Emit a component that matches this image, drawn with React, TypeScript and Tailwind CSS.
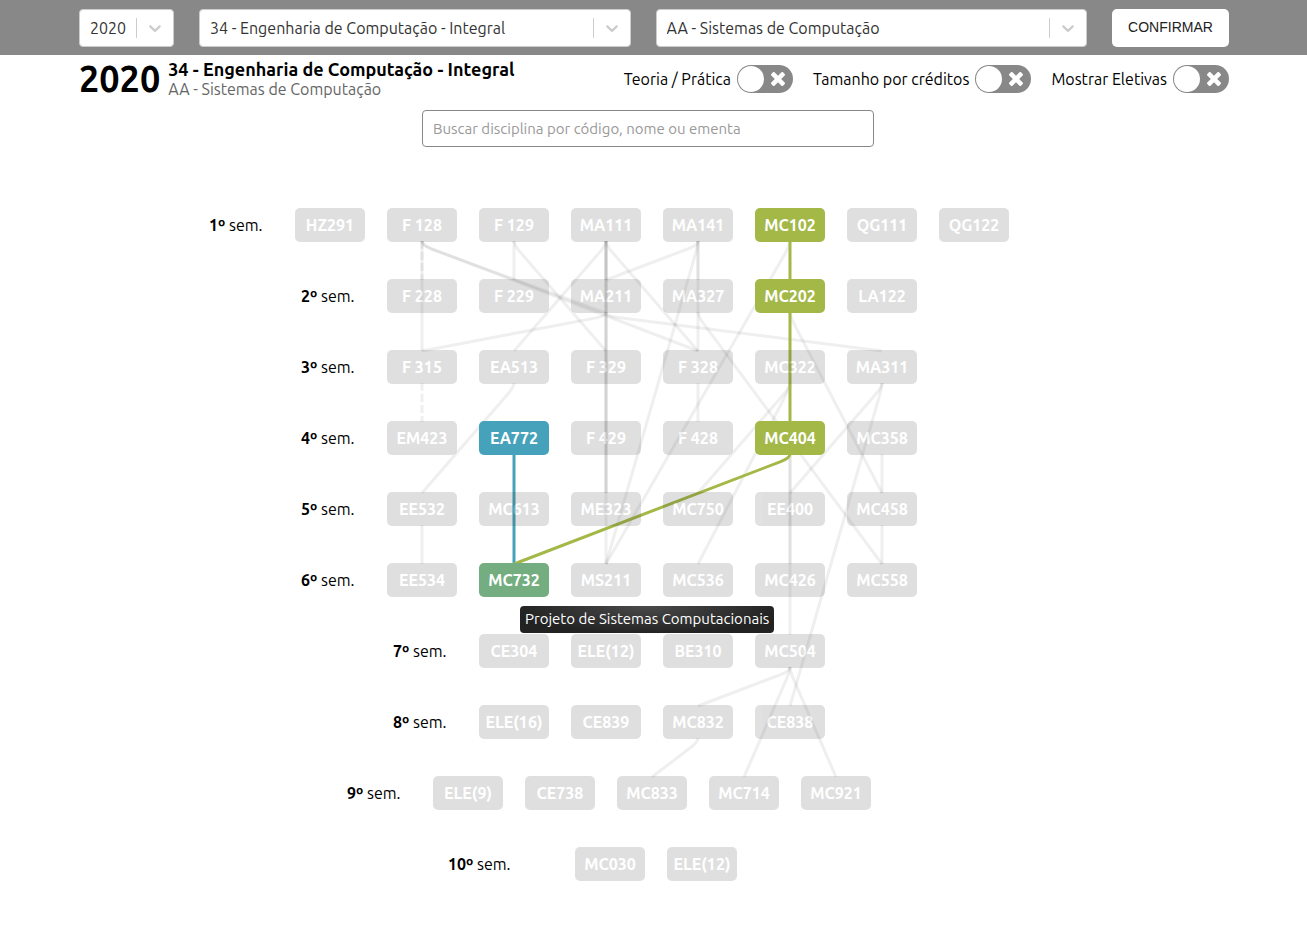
import { useState } from "react";
import type { ReactNode } from "react";

type Tone = "green" | "blue" | "mixed";

const TONES: Record<Tone, string> = {
  green: "bg-[#a3b847]",
  blue: "bg-[#46a2ba]",
  mixed: "bg-[#74ae80]",
};

const HIGHLIGHTED: Record<string, Tone> = {
  MC102: "green",
  MC202: "green",
  MC404: "green",
  EA772: "blue",
  MC732: "mixed",
};

const SEMESTERS: string[][] = [
  ["HZ291", "F 128", "F 129", "MA111", "MA141", "MC102", "QG111", "QG122"],
  ["F 228", "F 229", "MA211", "MA327", "MC202", "LA122"],
  ["F 315", "EA513", "F 329", "F 328", "MC322", "MA311"],
  ["EM423", "EA772", "F 429", "F 428", "MC404", "MC358"],
  ["EE532", "MC613", "ME323", "MC750", "EE400", "MC458"],
  ["EE534", "MC732", "MS211", "MC536", "MC426", "MC558"],
  ["CE304", "ELE(12)", "BE310", "MC504"],
  ["ELE(16)", "CE839", "MC832", "CE838"],
  ["ELE(9)", "CE738", "MC833", "MC714", "MC921"],
  ["MC030", "ELE(12)"],
];

// Geometry of the grid, relative to the first semester's label.
const PITCH_X = 92;
const PITCH_Y = 71;
const NODE_HEIGHT = 34;
const CENTER = 443;

const POSITIONS = new Map<string, { x: number; row: number }>();
SEMESTERS.forEach((codes, row) => {
  const shift = row === 9 ? 4 : 0;
  codes.forEach((code, i) => {
    POSITIONS.set(code, { x: CENTER + shift + (i - (codes.length - 1) / 2) * PITCH_X, row });
  });
});

const EDGES: [string, string][] = [
  ["F 128", "F 315"],
  ["F 128", "F 328"],
  ["F 129", "F 229"],
  ["F 129", "F 329"],
  ["MA111", "MA211"],
  ["MA111", "EA513"],
  ["MA111", "ME323"],
  ["MA111", "ME323"],
  ["MA111", "MS211"],
  ["MA111", "F 328"],
  ["MA141", "MA211"],
  ["MA141", "MA327"],
  ["MA141", "F 328"],
  ["MA141", "MS211"],
  ["MA211", "F 315"],
  ["MA211", "MA311"],
  ["MA327", "MC558"],
  ["MC102", "MS211"],
  ["MC202", "MC458"],
  ["F 328", "F 428"],
  ["EA513", "EE532"],
  ["EE532", "EE534"],
  ["MC322", "MC750"],
  ["MC322", "MC536"],
  ["MA311", "EE400"],
  ["MA311", "CE838"],
  ["MC358", "MC458"],
  ["MC458", "MC558"],
  ["MC404", "MC426"],
  ["MC404", "MC504"],
  ["MC504", "MC832"],
  ["MC504", "MC714"],
  ["MC504", "MC921"],
  ["MC832", "MC833"],
];

const DASHED: [string, string][] = [
  ["F 128", "F 228"],
  ["F 315", "EM423"],
];

const ACTIVE: [string, string, string][] = [
  ["EA772", "MC732", "#46a2ba"],
  ["MC102", "MC202", "#a3b847"],
  ["MC202", "MC404", "#a3b847"],
  ["MC404", "MC732", "#a3b847"],
];

// Leaves the course downwards, bends shortly, then runs straight to the target.
function edgePath(from: string, to: string) {
  const a = POSITIONS.get(from)!;
  const b = POSITIONS.get(to)!;
  const y1 = a.row * PITCH_Y + NODE_HEIGHT - 1;
  const y2 = b.row * PITCH_Y + 1;
  const bendY = y1 + 4;
  const dx = b.x - a.x;
  const dy = y2 - bendY;
  const t = 10 / Math.hypot(dx, dy);
  return `M${a.x} ${y1}Q${a.x} ${bendY} ${a.x + dx * t} ${bendY + dy * t}L${b.x} ${y2}`;
}

function Select({ label, options, className }: { label: string; options: string[]; className: string }) {
  return (
    <div className={`grid h-[38px] items-center rounded border border-[#ccc] bg-white ${className}`}>
      <select
        aria-label={label}
        className="col-start-1 row-start-1 h-full w-full appearance-none rounded bg-transparent pr-10 pl-[10px] text-[16px] text-[#333] outline-none"
      >
        {options.map((o) => (
          <option key={o}>{o}</option>
        ))}
      </select>
      <div className="pointer-events-none col-start-1 row-start-1 flex items-center justify-self-end">
        <span className="h-5 w-px bg-[#ccc]" />
        <svg viewBox="0 0 20 20" className="mx-2 size-5 fill-[#ccc]" aria-hidden="true">
          <path d="M4.516 7.548c0.436-0.446 1.043-0.481 1.576 0l3.908 3.747 3.908-3.747c0.533-0.481 1.141-0.446 1.574 0 0.436 0.445 0.408 1.197 0 1.615-0.406 0.418-4.695 4.502-4.695 4.502-0.217 0.223-0.502 0.335-0.787 0.335s-0.57-0.112-0.789-0.335c0 0-4.287-4.084-4.695-4.502s-0.436-1.17 0-1.615z" />
        </svg>
      </div>
    </div>
  );
}

function Toggle({ children }: { children: ReactNode }) {
  const [on, setOn] = useState(false);
  return (
    <label className="flex cursor-pointer items-center gap-[6px] text-[16px]">
      {children}
      <input type="checkbox" role="switch" checked={on} onChange={() => setOn(!on)} className="peer sr-only" />
      <span className="flex h-7 w-14 items-center justify-between rounded-full bg-[#888] pr-2 pl-px peer-checked:flex-row-reverse peer-checked:pr-px peer-checked:pl-2">
        <span className="size-[26px] rounded-full bg-white" />
        <svg viewBox="110 366 1188 1188" className="size-[14px] fill-white" aria-hidden="true">
          <path d="M1298 1322q0 40-28 68l-136 136q-28 28-68 28t-68-28l-294-294-294 294q-28 28-68 28t-68-28l-136-136q-28-28-28-68t28-68l294-294-294-294q-28-28-28-68t28-68l136-136q28-28 68-28t68 28l294 294 294-294q28-28 68-28t68 28l136 136q28 28 28 68t-28 68l-294 294 294 294q28 28 28 68z" />
        </svg>
      </span>
    </label>
  );
}

function Course({ code, tooltip }: { code: string; tooltip?: string }) {
  const tone = HIGHLIGHTED[code];
  return (
    <div className="relative">
      <button
        type="button"
        className={`h-[34px] w-[70px] rounded-[5px] text-center text-[16px] font-bold whitespace-nowrap text-white ${
          tone ? TONES[tone] : "bg-[#333] opacity-15"
        }`}
      >
        {code}
      </button>
      {tooltip && (
        <div
          role="tooltip"
          className="absolute top-[43px] left-[41px] z-10 flex h-[27px] items-center rounded bg-[radial-gradient(ellipse_at_top,#4a4a4a,#222_75%)] px-[5px] text-[15px] whitespace-nowrap text-white"
        >
          {tooltip}
        </div>
      )}
    </div>
  );
}

function Edges() {
  return (
    <svg className="pointer-events-none absolute inset-0 size-full overflow-visible" fill="none" strokeWidth="3" aria-hidden="true">
      <g stroke="#333" strokeOpacity="0.08">
        {EDGES.map(([a, b], i) => (
          <path key={i} d={edgePath(a, b)} />
        ))}
        <path d="M213 33Q213 37 222 41L397 105" />
        {DASHED.map(([a, b]) => (
          <path key={a + b} d={edgePath(a, b)} strokeDasharray="8 3" />
        ))}
      </g>
      {ACTIVE.map(([a, b, color]) => (
        <path key={a + b} d={edgePath(a, b)} stroke={color} />
      ))}
    </svg>
  );
}

export default function App() {
  return (
    <div className="min-h-screen bg-white font-[Ubuntu,'Noto_Sans',sans-serif] text-black">
      <header className="bg-[#888] pr-[78px] pl-[79px]">
        <form className="flex h-[55px] items-center gap-[25px]" onSubmit={(e) => e.preventDefault()}>
          <Select label="Ano" options={["2020"]} className="w-[95px]" />
          <Select label="Curso" options={["34 - Engenharia de Computação - Integral"]} className="min-w-0 flex-1" />
          <Select label="Modalidade" options={["AA - Sistemas de Computação"]} className="min-w-0 flex-1" />
          <button
            type="submit"
            className="h-[38px] w-[117px] rounded-[5px] bg-white font-['Liberation_Sans',Arial,sans-serif] text-[14px] text-[#222]"
          >
            CONFIRMAR
          </button>
        </form>
      </header>

      <main>
        <section className="flex h-[55px] items-center justify-between pr-[78px] pb-2 pl-[79px]">
          <div className="flex items-center gap-2">
            <span className="text-[36px] leading-[42px] font-bold">2020</span>
            <div>
              <h1 className="text-[18px] leading-5 font-bold">34 - Engenharia de Computação - Integral</h1>
              <p className="text-[16px] leading-5 text-[#666]">AA - Sistemas de Computação</p>
            </div>
          </div>
          <div className="flex items-center gap-5">
            <Toggle>Teoria / Prática</Toggle>
            <Toggle>Tamanho por créditos</Toggle>
            <Toggle>Mostrar Eletivas</Toggle>
          </div>
        </section>

        <div className="flex justify-center pr-[11px]">
          <input
            type="search"
            aria-label="Buscar disciplina"
            placeholder="Buscar disciplina por código, nome ou ementa"
            className="h-[37px] w-[452px] rounded border border-[#888] px-[10px] text-[15px] outline-none placeholder:text-[#999]"
          />
        </div>

        <div className="flex justify-center pt-[61px] pr-[3px] pb-[70px]">
          <div className="relative flex flex-col gap-[37px]">
            <Edges />
            {SEMESTERS.map((codes, row) => (
              <div key={row} className={`flex items-center justify-center ${row === 9 ? "pr-[108px]" : "pr-[75px]"}`}>
                <div className={`text-[16px] ${row === 9 ? "w-[116px]" : "w-[75px]"}`}>
                  <b>{row + 1}º</b> sem.
                </div>
                <div className="flex gap-[22px] px-[11px]">
                  {codes.map((code) => (
                    <Course
                      key={code}
                      code={code}
                      tooltip={code === "MC732" ? "Projeto de Sistemas Computacionais" : undefined}
                    />
                  ))}
                </div>
              </div>
            ))}
          </div>
        </div>
      </main>
    </div>
  );
}
